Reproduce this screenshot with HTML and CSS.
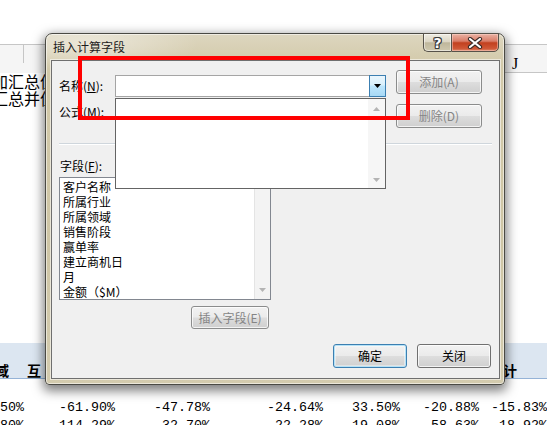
FILE: index.html
```html
<!DOCTYPE html>
<html lang="zh-CN">
<head>
<meta charset="utf-8">
<title>插入计算字段</title>
<link rel="stylesheet" href="styles.css">
</head>
<body>
<div class="sheet">
  <div class="colhdr">
    <div class="hc1"></div>
    <div class="hcj">J</div>
  </div>
  <div class="txt">加汇总值</div>
  <div class="txt">汇总并值</div>
  <div class="band"><span class="b1">域</span><span class="b2">互</span><span class="b3">合计</span></div>
  <div class="nums">
    <span>50%</span><span>-61.90%</span><span>-47.78%</span><span>-24.64%</span><span>33.50%</span><span>-20.88%</span><span>-15.83%</span>
  </div>
  <div class="nums">
    <span>80%</span><span>114.29%</span><span>32.70%</span><span>22.28%</span><span>-19.08%</span><span>58.63%</span><span>18.92%</span>
  </div>
</div>

<div class="dialog">
  <div class="titlebar">
    <span class="title">插入计算字段</span>
    <div class="capbtns">
      <div class="cap help">?</div>
      <div class="cap close">
        <svg width="16" height="12" viewBox="0 0 16 12"><path d="M3 2 L13 10 M13 2 L3 10" stroke="#3a2a26" stroke-width="4.2" stroke-linecap="round" fill="none"/><path d="M3 2 L13 10 M13 2 L3 10" stroke="#fff" stroke-width="2.2" stroke-linecap="round" fill="none"/></svg>
      </div>
    </div>
  </div>
  <div class="client">
    <div class="top">
      <div class="fields">
        <div class="frow rname">
          <span class="lbl">名称(<u>N</u>):</span>
          <div class="combo">
            <div class="combobtn"><svg width="7" height="4" viewBox="0 0 7 4"><path d="M0 0 H7 L3.5 4 Z" fill="#000"/></svg></div>
          </div>
        </div>
        <div class="frow rformula">
          <span class="lbl">公式(<u>M</u>):</span>
          <div class="edit"></div>
        </div>
      </div>
      <div class="sidebtns">
        <div class="btn dis side">添加(A)</div>
        <div class="btn dis side">删除(D)</div>
      </div>
    </div>
    <div class="sep"></div>
    <div class="flabel">字段(<u>F</u>):</div>
    <div class="listbox">
      <ul class="items">
        <li>客户名称</li>
        <li>所属行业</li>
        <li>所属领域</li>
        <li>销售阶段</li>
        <li>赢单率</li>
        <li>建立商机日</li>
        <li>月</li>
        <li>金额（$M）</li>
      </ul>
      <div class="vscroll">
        <svg width="7" height="4" viewBox="0 0 7 4"><path d="M0 0 H7 L3.5 4 Z" fill="#b4b4b4"/></svg>
      </div>
    </div>
    <div class="insrow"><div class="btn dis ins">插入字段(E)</div></div>
    <div class="okrow">
      <div class="btn def ok">确定</div>
      <div class="btn ok">关闭</div>
    </div>
    <div class="droplist">
      <div class="dscroll">
        <svg width="7" height="4" viewBox="0 0 7 4"><path d="M0 4 H7 L3.5 0 Z" fill="#b4b4b4"/></svg>
        <svg width="7" height="4" viewBox="0 0 7 4"><path d="M0 0 H7 L3.5 4 Z" fill="#b4b4b4"/></svg>
      </div>
    </div>
  </div>
</div>
<div class="redbox"></div>
</body>
</html>
```
FILE: styles.css
```css
* { box-sizing: border-box; margin: 0; padding: 0; }
html, body { width: 547px; height: 425px; overflow: hidden; background: #fff; }
body { position: relative; font-family: "Noto Sans CJK SC", "Noto Sans", sans-serif; color: #000; text-spacing-trim: space-all; font-feature-settings: "chws" 0, "halt" 0, "palt" 0; }

/* background spreadsheet */
.sheet { padding-top: 44px; }
.colhdr { height: 29px; border-top: 1px solid #c6c6c6; background: #f5f5f5; display: flex; }
.hc1 { width: 24px; height: 18px; border-right: 1px solid #c6c6c6; }
.hcj { margin-left: auto; width: 42px; height: 28px; border-bottom: 1px solid #c6c6c6; font-family: "Liberation Serif", serif; font-size: 16px; line-height: 18px; padding: 10px 0 0 7px; }
.txt { font-size: 16px; line-height: 17px; margin-left: -8px; white-space: nowrap; }
.band { margin-top: 236px; height: 36px; background: #dce6f1; border-bottom: 1px solid #95b3d7; display: flex; font-size: 14px; font-weight: 700; line-height: 14px; padding-top: 20px; white-space: nowrap; }
.b1 { margin-left: -5px; }
.b2 { margin-left: 18px; }
.b3 { margin-left: 448px; }
.nums { display: grid; grid-template-columns: 20px 95px 95px 113px 77px 79px 68px; font-family: "Liberation Mono", monospace; font-size: 13.33px; line-height: 18px; text-align: right; white-space: nowrap; }
.band + .nums { margin-top: 20px; }

/* dialog window */
.dialog { position: absolute; left: 45px; top: 33px; width: 460px; height: 352px; border: 1px solid #4a4a44; border-radius: 7px 7px 4px 4px;
  background: radial-gradient(ellipse 160px 40px at 40px 10px, rgba(255,255,255,0.45), rgba(255,255,255,0) 70%), linear-gradient(180deg, #ddd6bf 0%, #d2c9a9 9%, #cec5a5 60%, #d3cbae 100%);
  box-shadow: inset 0 0 0 1px rgba(255,255,255,0.55), 0 4px 11px 2px rgba(0,0,0,0.5);
  display: flex; flex-direction: column; padding-bottom: 5px; z-index: 2; }
.titlebar { height: 26px; display: flex; align-items: center; padding: 0 5px 0 7px; }
.title { font-size: 12px; color: #1c1c1c; line-height: 16px; }
.capbtns { margin-left: auto; align-self: flex-start; margin-top: -1px; display: flex; height: 19px; }
.cap { height: 19px; display: flex; align-items: center; justify-content: center; border: 1px solid #57524a; }
.help { width: 28px; border-right: none; border-radius: 0 0 0 5px; background: linear-gradient(180deg, #efece3 0%, #dcd6c4 45%, #bfb79c 52%, #cfc8ae 100%); box-shadow: inset 0 0 0 1px rgba(255,255,255,0.5);
  color: #fff; font-family: "DejaVu Sans", sans-serif; font-weight: 700; font-size: 14px; line-height: 14px;
  text-shadow: 1px 0 #3b3b3b, -1px 0 #3b3b3b, 0 1px #3b3b3b, 0 -1px #3b3b3b, 1px 1px #3b3b3b, -1px -1px #3b3b3b, 1px -1px #3b3b3b, -1px 1px #3b3b3b; }
.close { width: 48px; border-radius: 0 0 5px 0; background: linear-gradient(180deg, #eab2a4 0%, #d97d68 42%, #c2401f 52%, #cf5736 85%, #de8a6e 100%); box-shadow: inset 0 0 0 1px rgba(255,220,210,0.45); }

.client { position: relative; height: 319px; margin: 0 4px 0 5px; border: 1px solid #6f6f6f; background: #f0f0f0; box-shadow: 0 0 0 1px rgba(255,255,255,0.55); padding: 9px 7px 0 7px; font-size: 12px; }
.top { display: flex; height: 58px; }
.fields { width: 327px; }
.frow { display: flex; align-items: center; height: 22px; }
.rname { margin-top: 5px; }
.rformula { margin-top: 4px; }
.lbl { width: 56px; line-height: 16px; white-space: nowrap; }
u { text-decoration: underline; text-underline-offset: 1px; }
.combo { position: relative; width: 271px; height: 22px; border: 1px solid #a5a5a5; background: #fff; }
.combobtn { position: absolute; right: -1px; top: -1px; width: 17px; height: 22px; border: 1px solid #3c7fb1; background: linear-gradient(180deg, #eaf6fd 0%, #d9f0fc 45%, #bee6fd 50%, #a7d9f5 100%); display: flex; align-items: center; justify-content: center; }
.edit { width: 271px; height: 22px; border: 1px solid #a5a5a5; background: #fff; }
.sidebtns { margin-left: 10px; display: flex; flex-direction: column; gap: 10px; }

.btn { display: flex; align-items: center; justify-content: center; border: 1px solid #707070; border-radius: 3px; background: linear-gradient(180deg, #f2f2f2 0%, #ebebeb 48%, #dddddd 52%, #cfcfcf 100%); box-shadow: inset 0 0 0 1px rgba(255,255,255,0.75); line-height: 16px; white-space: nowrap; }
.dis { color: #858585; border-color: #8b8c8c; }
.side { width: 86px; height: 24px; }
.ins { width: 78px; height: 23px; margin-left: 132px; }
.ok { width: 74px; height: 24px; }
.def { border-color: #3c7fb1; box-shadow: inset 0 0 0 1px #b5e2f7, inset 0 0 0 2px rgba(255,255,255,0.4); }

.sep { margin-top: 15px; height: 2px; border-top: 1px solid #cfd6dc; border-bottom: 1px solid #fff; }
.flabel { margin-top: 13px; line-height: 16px; padding-left: 1px; }
.listbox { margin-top: 3px; width: 212px; height: 123px; border: 1px solid #828790; background: #fff; display: flex; }
.items { flex: 1; list-style: none; padding: 1px 0 0 3px; font-size: 12px; }
.items li { line-height: 15px; height: 15px; white-space: nowrap; }
.vscroll { width: 16px; background: #f3f3f3; border-left: 1px solid #e4e4e4; display: flex; flex-direction: column; justify-content: flex-end; align-items: center; padding-bottom: 7px; }
.insrow { margin-top: 6px; display: flex; }
.okrow { margin-top: 15px; display: flex; justify-content: flex-end; gap: 10px; margin-right: 1px; }

.droplist { position: absolute; left: 63px; top: 37px; width: 271px; height: 91px; border: 1px solid #646464; background: #fff; display: flex; justify-content: flex-end; }
.dscroll { width: 17px; background: #f6f6f6; display: flex; flex-direction: column; justify-content: space-between; align-items: center; padding: 8px 0 6px; }

.redbox { position: absolute; left: 78px; top: 56px; width: 332px; height: 64px; border: 4px solid #ff0000; z-index: 3; }
```
